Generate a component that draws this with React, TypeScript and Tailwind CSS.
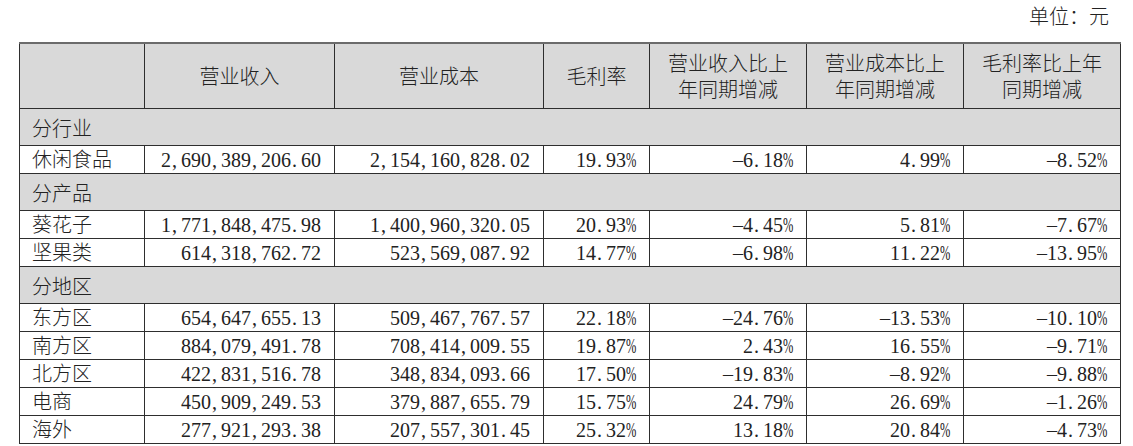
import React from "react";

const cjk = { fontFamily: '"Noto Sans CJK SC", "Noto Sans", sans-serif' };

function Num({ s }: { s: string }) {
  return (
    <span className="inline-flex whitespace-nowrap" style={{ fontFamily: '"Liberation Serif", "DejaVu Serif", serif' }}>
      {s.split("").map((c, i) => {
        if (c === "," || c === ".") {
          return (
            <span key={i} className="inline-block w-[10px] text-left pl-[1px]">
              {c}
            </span>
          );
        }
        if (c === "%") {
          return (
            <span key={i} className="inline-block w-[10px]">
              <span className="inline-block origin-left scale-x-[0.62]">%</span>
            </span>
          );
        }
        if (c === "-") {
          return (
            <span key={i} className="inline-block w-[10px] text-center">
              –
            </span>
          );
        }
        return (
          <span key={i} className="inline-block w-[10px] text-center">
            {c}
          </span>
        );
      })}
    </span>
  );
}

type Row = { type: "group"; label: string } | { type: "data"; label: string; vals: string[] };

const rows: Row[] = [
  { type: "group", label: "分行业" },
  { type: "data", label: "休闲食品", vals: ["2,690,389,206.60", "2,154,160,828.02", "19.93%", "-6.18%", "4.99%", "-8.52%"] },
  { type: "group", label: "分产品" },
  { type: "data", label: "葵花子", vals: ["1,771,848,475.98", "1,400,960,320.05", "20.93%", "-4.45%", "5.81%", "-7.67%"] },
  { type: "data", label: "坚果类", vals: ["614,318,762.72", "523,569,087.92", "14.77%", "-6.98%", "11.22%", "-13.95%"] },
  { type: "group", label: "分地区" },
  { type: "data", label: "东方区", vals: ["654,647,655.13", "509,467,767.57", "22.18%", "-24.76%", "-13.53%", "-10.10%"] },
  { type: "data", label: "南方区", vals: ["884,079,491.78", "708,414,009.55", "19.87%", "2.43%", "16.55%", "-9.71%"] },
  { type: "data", label: "北方区", vals: ["422,831,516.78", "348,834,093.66", "17.50%", "-19.83%", "-8.92%", "-9.88%"] },
  { type: "data", label: "电商", vals: ["450,909,249.53", "379,887,655.79", "15.75%", "24.79%", "26.69%", "-1.26%"] },
  { type: "data", label: "海外", vals: ["277,921,293.38", "207,557,301.45", "25.32%", "13.18%", "20.84%", "-4.73%"] },
];

export default function App() {
  const cell = "border border-[#2e2e2e]";
  return (
    <div className="w-[1133px] h-[446px] bg-white text-[#222] overflow-hidden" style={cjk}>
      <div className="h-[42px] pr-[24px] text-right text-[20px] leading-[32px] font-light">单位：元</div>
      <div className="pl-[19px]">
        <table className="table-fixed border-collapse w-[1101px] text-[20px] font-light">
          <colgroup>
            <col className="w-[125px]" />
            <col className="w-[190px]" />
            <col className="w-[209px]" />
            <col className="w-[106px]" />
            <col className="w-[157px]" />
            <col className="w-[157px]" />
            <col className="w-[157px]" />
          </colgroup>
          <thead>
            <tr className="h-[65px] bg-[#d9d9d9]">
              <th className={`${cell} border-t-2 border-t-[#6b6b6b] font-light`}></th>
              <th className={`${cell} border-t-2 border-t-[#6b6b6b] font-light leading-[26px]`}>营业收入</th>
              <th className={`${cell} border-t-2 border-t-[#6b6b6b] font-light leading-[26px]`}>营业成本</th>
              <th className={`${cell} border-t-2 border-t-[#6b6b6b] font-light leading-[26px]`}>毛利率</th>
              <th className={`${cell} border-t-2 border-t-[#6b6b6b] font-light leading-[26px]`}>
                营业收入比上
                <br />
                年同期增减
              </th>
              <th className={`${cell} border-t-2 border-t-[#6b6b6b] font-light leading-[26px]`}>
                营业成本比上
                <br />
                年同期增减
              </th>
              <th className={`${cell} border-t-2 border-t-[#6b6b6b] font-light leading-[26px]`}>
                毛利率比上年
                <br />
                同期增减
              </th>
            </tr>
          </thead>
          <tbody>
            {rows.map((r, i) =>
              r.type === "group" ? (
                <tr key={i} className="h-[37px] bg-[#d9d9d9]">
                  <td colSpan={7} className={`${cell} pl-[12px] pt-[2px] leading-[26px]`}>
                    {r.label}
                  </td>
                </tr>
              ) : (
                <tr key={i} className="h-[28px]">
                  <td className={`${cell} pl-[12px] leading-[26px]`}>{r.label}</td>
                  {r.vals.map((v, j) => (
                    <td key={j} className={`${cell} text-right pr-[13px] leading-[26px]`}>
                      <Num s={v} />
                    </td>
                  ))}
                </tr>
              )
            )}
          </tbody>
        </table>
      </div>
    </div>
  );
}
